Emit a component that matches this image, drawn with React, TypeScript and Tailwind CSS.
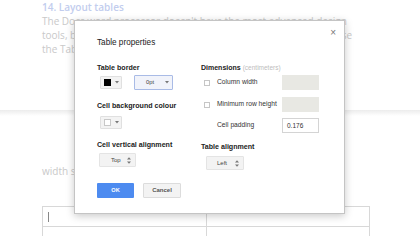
import React from "react";

const Caret = () => (
  <svg width="4" height="3" viewBox="0 0 4 3" className="block">
    <path d="M0 0 L4 0 L2 2.5 Z" fill="#777" />
  </svg>
);

const UpDown = () => (
  <svg width="4" height="7" viewBox="0 0 4 7" className="block">
    <path d="M0 2.6 L4 2.6 L2 0.2 Z" fill="#777" />
    <path d="M0 4.4 L4 4.4 L2 6.8 Z" fill="#777" />
  </svg>
);

const Label = ({ children }: { children: React.ReactNode }) => (
  <div className="h-[10px] leading-[10px] text-[7.1px] font-bold text-[#222] whitespace-nowrap">{children}</div>
);

export default function App() {
  return (
    <div className="relative w-[420px] h-[236px] overflow-hidden bg-white">
      {/* background document */}
      <div className="font-['Open_Sans',sans-serif] text-[10px] leading-[14px] text-[#c9c9c9]">
        <div className="pl-[42px] whitespace-nowrap">
          <div className="font-semibold text-[#c2cdee]">14. Layout tables</div>
          <div>The Docs word processor doesn't have the most advanced design</div>
          <div>tools, but you can create simple layouts with tables. To do this, use</div>
          <div>the Table properties dialog box and set the borders to 0pt</div>
        </div>
        <div className="mt-[54px] h-[6px] bg-gradient-to-b from-[#ececec] to-white" />
        <div className="pl-[42px] mt-[48px] whitespace-nowrap">width set to 0pt to hide the table lines</div>
        <div className="ml-[42px] mt-[28px] w-[328px] grid grid-cols-[164px_163px] border-t border-l border-[#d8d8d8]">
          <div className="h-[20px] border-r border-b border-[#d8d8d8] pl-[5px] pt-[5px]">
            <div className="w-px h-[10px] bg-[#888]" />
          </div>
          <div className="h-[20px] border-r border-b border-[#d8d8d8]" />
          <div className="h-[20px] border-r border-b border-[#d8d8d8]" />
          <div className="h-[20px] border-r border-b border-[#d8d8d8]" />
        </div>
      </div>

      {/* dialog */}
      <div className="absolute left-[74px] top-[20px] w-[271px] h-[194px] bg-white border border-[#c4c4c4] shadow-[0_2px_8px_rgba(0,0,0,0.22)] font-['Liberation_Sans',Arial,sans-serif]">
        <div className="h-[17px] flex justify-end pr-[8px] pt-[7px]">
          <span className="text-[10px] leading-[10px] text-[#777]">×</span>
        </div>
        <div className="pl-[22px] text-[8.2px] leading-[10px] text-[#222]">Table properties</div>

        <div className="flex pl-[22px] mt-[15px]">
          {/* left column */}
          <div className="w-[104px] flex flex-col items-start">
            <Label>Table border</Label>
            <div className="mt-[2px] h-[15px] flex items-center">
              <div className="ml-[3px] w-[22px] h-[13px] bg-[#f3f3f3] border border-[#e0e0e0] rounded-[1px] flex items-center pl-[3px] gap-[4px]">
                <div className="w-[7px] h-[7px] bg-black" />
                <Caret />
              </div>
              <div className="ml-[12px] w-[39px] h-[15px] bg-[#f1f3fa] border border-[#a9bbe6] rounded-[1px] flex items-center justify-between pl-[11px] pr-[3px]">
                <span className="text-[5.8px] leading-none text-[#444]">0pt</span>
                <Caret />
              </div>
            </div>
            <div className="mt-[11px]">
              <Label>Cell background colour</Label>
            </div>
            <div className="mt-[5px] ml-[3px] w-[22px] h-[13px] bg-[#f3f3f3] border border-[#e0e0e0] rounded-[1px] flex items-center pl-[3px] gap-[4px]">
              <div className="w-[7px] h-[7px] bg-white border border-[#c8c8c8]" />
              <Caret />
            </div>
            <div className="mt-[11px]">
              <Label>Cell vertical alignment</Label>
            </div>
            <div className="mt-[3px] ml-[2px] w-[37px] h-[14px] bg-[#f3f3f3] border border-[#e4e4e4] rounded-[1px] flex items-center justify-between pl-[11px] pr-[4px]">
              <span className="text-[6px] leading-none text-[#444]">Top</span>
              <UpDown />
            </div>
            <div className="mt-[16px] flex gap-[9px]">
              <div className="w-[37px] h-[15px] bg-[#4d8bf0] rounded-[1px] flex items-center justify-center text-[5.6px] font-bold text-white">OK</div>
              <div className="w-[38px] h-[15px] bg-[#f3f3f3] border border-[#dcdcdc] rounded-[1px] flex items-center justify-center text-[6px] font-bold text-[#555]">Cancel</div>
            </div>
          </div>

          {/* right column */}
          <div className="flex flex-col items-start">
            <div className="flex items-baseline h-[10px] leading-[10px]">
              <span className="text-[7px] font-bold text-[#222]">Dimensions</span>
              <span className="ml-[2px] text-[6.5px] text-[#bdbdbd]">(centimeters)</span>
            </div>
            <div className="mt-[2px] h-[15px] flex items-center">
              <div className="ml-[3px] w-[6px] h-[6px] border border-[#c6c6c6] bg-white" />
              <div className="ml-[7px] w-[65px] text-[6.7px] text-[#333] whitespace-nowrap">Column width</div>
              <div className="w-[37px] h-[15px] bg-[#e8e8e3]" />
            </div>
            <div className="mt-[7px] h-[15px] flex items-center">
              <div className="ml-[3px] w-[6px] h-[6px] border border-[#c6c6c6] bg-white" />
              <div className="ml-[7px] w-[65px] text-[6.7px] text-[#333] whitespace-nowrap">Minimum row height</div>
              <div className="w-[37px] h-[15px] bg-[#e8e8e3]" />
            </div>
            <div className="mt-[6px] h-[15px] flex items-center">
              <div className="ml-[16px] w-[65px] text-[6.7px] text-[#333] whitespace-nowrap">Cell padding</div>
              <div className="w-[37px] h-[15px] bg-white border border-[#d4d4d4] flex items-center pl-[4px] text-[6.5px] text-[#333]">0.176</div>
            </div>
            <div className="mt-[9px]">
              <Label>Table alignment</Label>
            </div>
            <div className="mt-[4px] ml-[5px] w-[38px] h-[14px] bg-[#f3f3f3] border border-[#e4e4e4] rounded-[1px] flex items-center justify-between pl-[10px] pr-[4px]">
              <span className="text-[6px] leading-none text-[#444]">Left</span>
              <UpDown />
            </div>
          </div>
        </div>
      </div>
    </div>
  );
}
